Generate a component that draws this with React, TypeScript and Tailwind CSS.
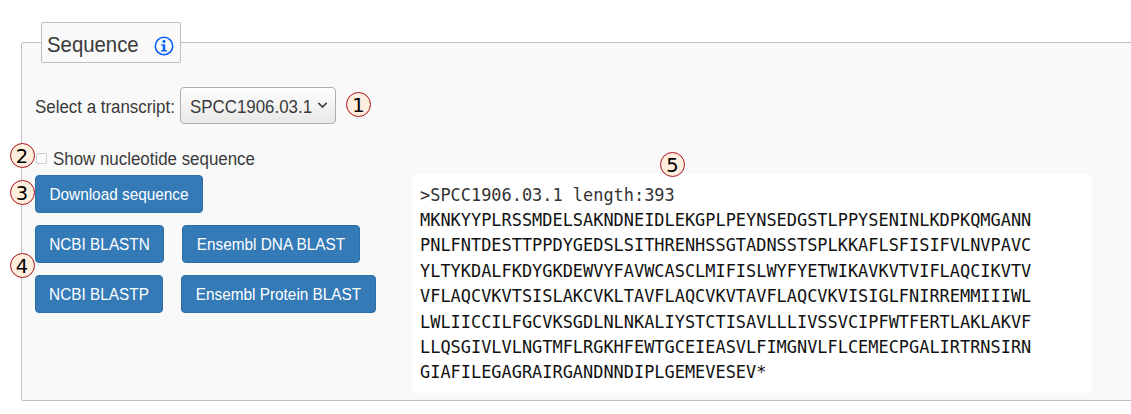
import React from "react";

const sequence = [
  "MKNKYYPLRSSMDELSAKNDNEIDLEKGPLPEYNSEDGSTLPPYSENINLKDPKQMGANN",
  "PNLFNTDESTTPPDYGEDSLSITHRENHSSGTADNSSTSPLKKAFLSFISIFVLNVPAVC",
  "YLTYKDALFKDYGKDEWVYFAVWCASCLMIFISLWYFYETWIKAVKVTVIFLAQCIKVTV",
  "VFLAQCVKVTSISLAKCVKLTAVFLAQCVKVTAVFLAQCVKVISIGLFNIRREMMIIIWL",
  "LWLIICCILFGCVKSGDLNLNKALIYSTCTISAVLLLIVSSVCIPFWTFERTLAKLAKVF",
  "LLQSGIVLVLNGTMFLRGKHFEWTGCEIEASVLFIMGNVLFLCEMECPGALIRTRNSIRN",
  "GIAFILEGAGRAIRGANDNNDIPLGEMEVESEV*",
];

function Badge({ label, place }: { label: string; place: string }) {
  return (
    <span
      className={`absolute z-10 flex size-[25px] items-center justify-center rounded-full border border-[#a8121c] bg-[#ffeedd] pt-[2px] font-['DejaVu_Sans'] text-[19.5px] leading-none text-black ${place}`}
    >
      {label}
    </span>
  );
}

function Button({ children, width }: { children: React.ReactNode; width: string }) {
  return (
    <button
      className={`flex h-[38px] items-center justify-center rounded-[4px] border border-[#2e6da4] bg-[#337ab7] pt-[2px] text-[15.35px] leading-none whitespace-nowrap text-white ${width}`}
    >
      <span className="scale-y-[1.08]">{children}</span>
    </button>
  );
}

export default function App() {
  return (
    <main className="relative h-[414px] w-[1131px] overflow-hidden bg-white pt-[22px] pl-[21px] font-['Liberation_Sans',sans-serif] text-[16.9px] text-[#3a3a3a]">
      <section className="mt-5 flex h-[359px] w-[1130px] flex-col rounded-[2px] border border-[#c0c0c0] bg-[#f9f9f9] pl-[13px]">
        <h2 className="-mt-[21px] ml-[6px] flex h-[41px] w-[140px] items-center rounded-[2px] border border-[#c0c0c0] bg-[#f9f9f9] pt-[5px] pl-[5px] text-[20.35px] leading-none">
          <span className="scale-y-[1.05]">Sequence</span>
          <svg className="mt-[1px] ml-[15px] size-[20px]" viewBox="0 0 20 20" fill="none">
            <circle cx="10" cy="10" r="8.7" stroke="#0d63f8" strokeWidth="1.6" />
            <circle cx="10" cy="5.4" r="1.55" fill="#0d63f8" />
            <path d="M7.3 8.2h4v5.9h1.6v1.5H7.2v-1.5h1.6V9.7H7.3z" fill="#0d63f8" />
          </svg>
        </h2>

        <div className="mt-[24px] flex h-[37px] items-center">
          <span className="w-[145px] scale-y-[1.05] pt-[6px] leading-none whitespace-nowrap">Select a transcript:</span>
          <button className="flex h-[37px] w-[156px] items-center rounded-[4px] border border-[#aeaeae] bg-linear-to-b from-[#fefefe] to-[#e9e8e7] pt-[6px] pr-0 pl-[9px] text-[16.9px] leading-none">
            <span className="w-[127px] scale-y-[1.05] text-left">SPCC1906.03.1</span>
            <svg className="-mt-[8px] h-[8px] w-[11px]" viewBox="0 0 11 8" fill="none">
              <path d="M1.3 1.8 5.5 6l4.2-4.2" stroke="#444" strokeWidth="1.7" />
            </svg>
          </button>
        </div>

        <div className="mt-[24px] flex h-[20px] items-center">
          <span className="ml-[1px] size-[11px] rounded-[2px] border border-[#ccc] bg-[#fbfbfb]" />
          <span className="ml-[6px] scale-y-[1.05] pt-[5px] leading-none">Show nucleotide sequence</span>
        </div>

        <div className="mt-[7px] flex items-start">
          <div className="flex w-[377px] flex-col gap-3">
            <Button width="w-[168px]">Download sequence</Button>
            <div className="flex gap-[18px]">
              <Button width="w-[129px]">NCBI BLASTN</Button>
              <Button width="w-[178px]">Ensembl DNA BLAST</Button>
            </div>
            <div className="flex gap-[18px]">
              <Button width="w-[128px]">NCBI BLASTP</Button>
              <Button width="w-[195px]">Ensembl Protein BLAST</Button>
            </div>
          </div>
          <pre className="-mt-px h-[219px] w-[680px] rounded-[2px] bg-white pt-[8.6px] pl-[8px] font-['DejaVu_Sans_Mono',monospace] text-[16.93px] leading-[25.4px] text-[#111]">
            <span className="block text-[#333]">&gt;SPCC1906.03.1 length:393</span>
            {sequence.map((line) => (
              <span className="block" key={line}>{line}</span>
            ))}
          </pre>
        </div>
      </section>

      <Badge label="1" place="left-[346px] top-[92px]" />
      <Badge label="2" place="left-[9.5px] top-[143px]" />
      <Badge label="3" place="left-[9.5px] top-[180px]" />
      <Badge label="4" place="left-[9.5px] top-[253px]" />
      <Badge label="5" place="left-[660px] top-[152px]" />
    </main>
  );
}
